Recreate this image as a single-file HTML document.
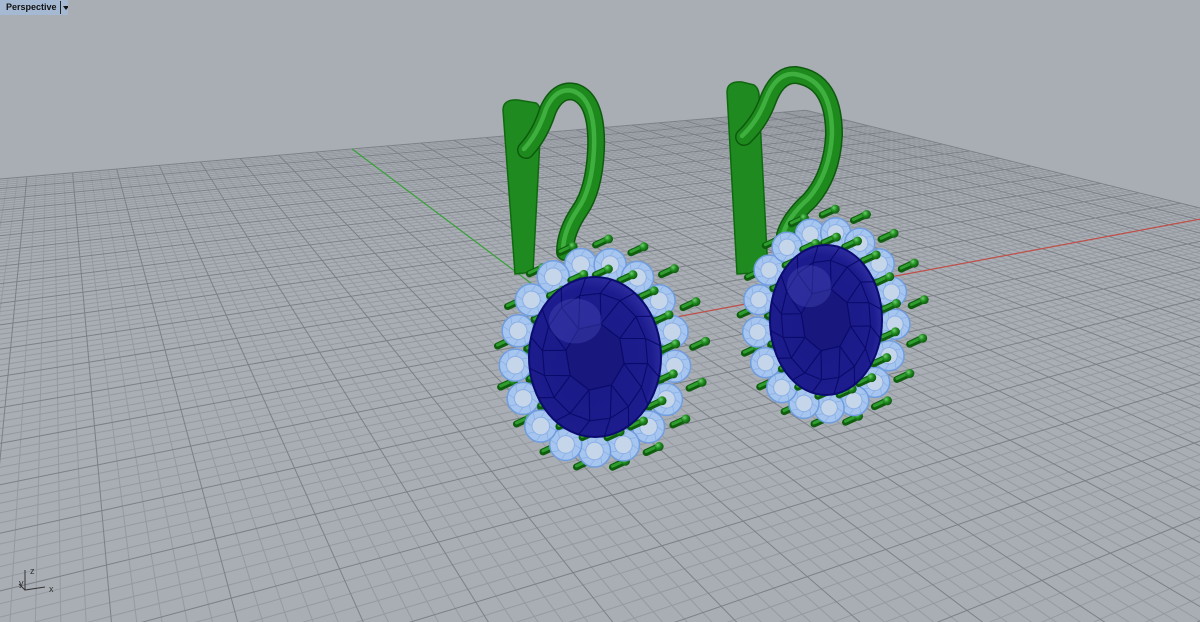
<!DOCTYPE html>
<html><head><meta charset="utf-8"><style>
html,body{margin:0;padding:0;width:1200px;height:622px;overflow:hidden;background:#a9adb4}
#lab{position:absolute;left:0;top:0;height:15px;background:#a6b9d2;font:bold 9px "Liberation Sans",sans-serif;color:#111;padding:0 0 0 6px;line-height:15px;width:62px;overflow:hidden}
#lab span{position:absolute;left:60px;top:1px;border-left:1px solid #222;height:13px;width:8px}
#lab span:after{content:"";position:absolute;left:2px;top:5px;border:3px solid transparent;border-top:4px solid #111}
svg{position:absolute;left:0;top:0}
.ax{position:absolute;font:9px "Liberation Sans",sans-serif;color:#333}
</style></head><body>
<svg id="s" width="1200" height="622" viewBox="0 0 1200 622"></svg>
<div id="lab">Perspective<span></span></div>
<div class="ax" style="left:30px;top:566px">z</div>
<div class="ax" style="left:19px;top:578px">y</div>
<div class="ax" style="left:49px;top:584px">x</div>
<script>
var NS="http://www.w3.org/2000/svg",S=document.getElementById('s');
function el(t,a,p){var e=document.createElementNS(NS,t);for(var k in a)e.setAttribute(k,a[k]);(p||S).appendChild(e);return e;}
var O=[596,332],VX=[2603,-43],VY=[51,-77];
function P(s,t){var d=1+s+t;return[(O[0]+s*VX[0]+t*VY[0])/d,(O[1]+s*VX[1]+t*VY[1])/d];}
var SM=0.457,TM=0.81,NU=80,NV=70;
var g=el('g',{});
for(var pass=0;pass<2;pass++){
for(var i=-NU;i<=NU;i++){var s=SM*i/NU;var maj=(i%5==0);if((pass==1)!=maj)continue;
 var t0=Math.max(-TM,-(1+s)+0.12);var a=P(s,t0),b=P(s,TM);
 el('line',{x1:a[0],y1:a[1],x2:b[0],y2:b[1],stroke:maj?'#7c8087':'#959aa1','stroke-width':1},g);}
for(var j=-NV;j<=NV;j++){var t=TM*j/NV;var maj=(j%5==0);if((pass==1)!=maj)continue;
 var s0=Math.max(-SM,-(1+t)+0.12);var a=P(s0,t),b=P(SM,t);
 el('line',{x1:a[0],y1:a[1],x2:b[0],y2:b[1],stroke:maj?'#7c8087':'#959aa1','stroke-width':1},g);}
}
var a=P(0,0),b=P(0,TM);el('line',{x1:a[0],y1:a[1],x2:b[0],y2:b[1],stroke:'#3aa33a','stroke-width':1.2});
b=P(SM,0);el('line',{x1:a[0],y1:a[1],x2:b[0],y2:b[1],stroke:'#c0504a','stroke-width':1.2});
el('path',{d:'M25 570 L25 590 L45 587 M25 590 L19 584',stroke:'#333',fill:'none','stroke-width':1});
var defs=el('defs',{});
var rg=el('radialGradient',{id:'gs',cx:0.45,cy:0.55,r:0.6},defs);
el('stop',{offset:0,'stop-color':'#191985'},rg);el('stop',{offset:0.8,'stop-color':'#1c1c8e'},rg);el('stop',{offset:1,'stop-color':'#3434a8'},rg);
var rb=el('radialGradient',{id:'gp',cx:0.35,cy:0.35,r:0.7},defs);
el('stop',{offset:0,'stop-color':'#6fd06f'},rb);el('stop',{offset:0.5,'stop-color':'#1f8a1f'},rb);el('stop',{offset:1,'stop-color':'#0c560c'},rb);

function earring(E){
 var G=el('g',{});
 el('path',{d:E.band,fill:'#1f8a1f',stroke:'#0f6a0f','stroke-width':1.5},G);
 el('path',{d:E.hoop,fill:'none',stroke:'#0d5a0d','stroke-width':E.hw+3,'stroke-linecap':'round'},G);
 el('path',{d:E.hoop,fill:'none',stroke:'#1e8a1e','stroke-width':E.hw,'stroke-linecap':'round'},G);
 el('path',{d:E.hoop,fill:'none',stroke:'#3fb03f','stroke-width':E.hw*0.3,'stroke-linecap':'round',transform:'translate(-2,-1)'},G);
 var cx=E.cx,cy=E.cy,rx=E.rx,ry=E.ry,n=E.n;
 var stones=[],prongs=[];
 for(var k=0;k<n;k++){var th=2*Math.PI*k/n+E.ph;
  stones.push([cx+(rx+E.sr-2)*Math.cos(th),cy+(ry+E.sr-2)*Math.sin(th)]);
  var th2=th+Math.PI/n;
  prongs.push([cx+(rx+2)*Math.cos(th2),cy+(ry+2)*Math.sin(th2)]);
  prongs.push([cx+(rx+2*E.sr)*Math.cos(th2),cy+(ry+2*E.sr)*Math.sin(th2)]);}
 el('ellipse',{cx:cx,cy:cy,rx:rx+5,ry:ry+5,fill:'#1a7d1a',stroke:'#0c560c','stroke-width':2},G);
 function prong(p){
  var ex=p[0]+E.dx,ey=p[1]+E.dy;
  el('line',{x1:p[0],y1:p[1],x2:ex,y2:ey,stroke:'#0e5e0e','stroke-width':7,'stroke-linecap':'round'},G);
  el('line',{x1:p[0],y1:p[1]-1,x2:ex,y2:ey-1,stroke:'#2f9e2f','stroke-width':3,'stroke-linecap':'round'},G);
  el('circle',{cx:ex,cy:ey,r:4.5,fill:'url(#gp)'},G);
 }
 prongs.filter(function(_,i){return i%2==1}).forEach(prong);
 stones.forEach(function(s){
  el('circle',{cx:s[0],cy:s[1],r:E.sr,fill:'#a6c6f0',stroke:'#6f9ddf','stroke-width':1.5},G);
  el('circle',{cx:s[0],cy:s[1],r:E.sr*0.55,fill:'#c5d5ea',stroke:'#8cb0e6','stroke-width':1},G);
  for(var q=0;q<8;q++){var a=q*Math.PI/4;el('line',{x1:s[0]+E.sr*0.55*Math.cos(a),y1:s[1]+E.sr*0.55*Math.sin(a),x2:s[0]+E.sr*Math.cos(a+0.3),y2:s[1]+E.sr*Math.sin(a+0.3),stroke:'#8cb0e6','stroke-width':0.8},G);}
 });
 prongs.filter(function(_,i){return i%2==0}).forEach(prong);
 el('ellipse',{cx:cx,cy:cy,rx:rx,ry:ry,fill:'url(#gs)',stroke:'#0b0b70','stroke-width':2},G);
 var inner=[],mid=[];
 for(var k=0;k<8;k++){var th=2*Math.PI*k/8+0.2;inner.push([cx+rx*0.45*Math.cos(th),cy+ry*0.42*Math.sin(th)]);}
 for(var k=0;k<16;k++){var th=2*Math.PI*k/16+0.1;mid.push([cx+rx*0.8*Math.cos(th),cy+ry*0.8*Math.sin(th)]);}
 var d='M'+inner.map(function(p){return p.join(' ')}).join(' L')+'Z';
 el('path',{d:d,fill:'#17177e',stroke:'#0a0a6a','stroke-width':1.2},G);
 var dd='';
 for(var k=0;k<16;k++){var m=mid[k],i=inner[Math.floor(k/2)],m2=mid[(k+1)%16];
  dd+='M'+i.join(' ')+'L'+m.join(' ')+'L'+m2.join(' ');
  var th=2*Math.PI*k/16+0.1;dd+='M'+m.join(' ')+'L'+(cx+rx*Math.cos(th+0.15))+' '+(cy+ry*Math.sin(th+0.15));}
 el('path',{d:dd,fill:'none',stroke:'#0a0a6a','stroke-width':1.1},G);
 el('ellipse',{cx:cx-rx*0.3,cy:cy-ry*0.45,rx:rx*0.4,ry:ry*0.28,fill:'#5050c0',opacity:0.35},G);
}
earring({band:'M503 110 Q503 99 518 100 L536 103 Q542 107 541 120 L533 272 L515 274 Z',
 hoop:'M526 150 Q540 135 548 110 Q558 88 575 92 Q598 100 596 150 Q594 190 580 210 Q565 232 565 252',hw:15,
 cx:595,cy:357,rx:66,ry:80,n:17,sr:16,ph:-1.75,dx:13,dy:-6});
earring({band:'M727 92 Q727 81 742 82 L754 85 Q760 89 759 100 L768 272 L737 274 Z',
 hoop:'M744 137 Q760 122 768 100 Q778 74 796 75 Q834 80 834 135 Q832 175 810 200 Q790 218 785 235',hw:15,
 cx:826,cy:320,rx:56,ry:75,n:17,sr:15,ph:-1.8,dx:13,dy:-6});
</script>
</body></html>
